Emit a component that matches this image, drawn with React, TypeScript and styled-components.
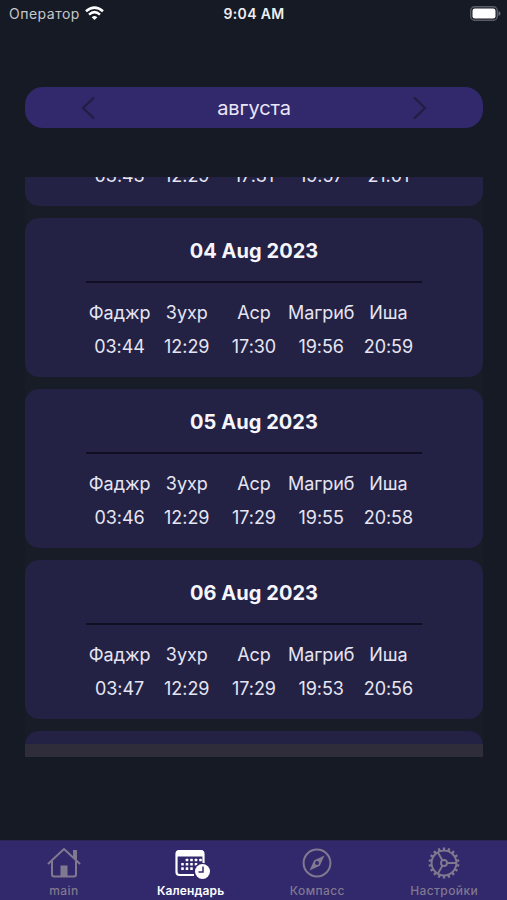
import React from "react";
import styled, { createGlobalStyle } from "styled-components";

const GlobalStyle = createGlobalStyle`
  * { box-sizing: border-box; }
  body { margin: 0; background: #161a24; }
`;

const Screen = styled.div`
  width: 507px;
  height: 900px;
  display: flex;
  flex-direction: column;
  overflow: hidden;
  background: #161a24;
  color: #e6e5f2;
  font-family: Inter, "Liberation Sans", sans-serif;
`;

const StatusBar = styled.header`
  height: 28px;
  flex: none;
  display: grid;
  grid-template-columns: 1fr auto 1fr;
  align-items: center;
  padding: 0 6px 0 9px;
`;

const Carrier = styled.div`
  display: flex;
  align-items: center;
  gap: 5px;
  padding-bottom: 2px;
  font-size: 14px;
  letter-spacing: 0.5px;
  color: #c6c7cd;
`;

const Clock = styled.div`
  margin-right: 2px;
  font-size: 14px;
  font-weight: 600;
  letter-spacing: 0.35px;
  line-height: 28px;
  color: #eeeef2;
`;

const Battery = styled.svg`
  justify-self: end;
  display: block;
  margin-bottom: 2px;
`;

const MonthBar = styled.nav`
  height: 41px;
  flex: none;
  margin: 59px 24px 0 25px;
  padding: 0 55px;
  display: flex;
  align-items: center;
  justify-content: space-between;
  border-radius: 18px;
  background: #32286c;
`;

const MonthName = styled.h1`
  margin: 0;
  font-size: 20px;
  font-weight: 400;
  line-height: 41px;
  letter-spacing: -0.1px;
  padding-top: 1px;
  color: #e9e6f7;
`;

const ArrowButton = styled.button`
  width: 16px;
  height: 24px;
  padding: 0;
  border: 0;
  background: none;
  color: #221e42;
  svg { display: block; }
`;

const Schedule = styled.main`
  position: relative;
  height: 580px;
  flex: none;
  margin: 49px 24px 0 25px;
  overflow: hidden;
  background: #181c27;
`;

const DayList = styled.div`
  margin-top: -130px;
  display: flex;
  flex-direction: column;
  gap: 12px;
`;

const ListEdge = styled.div`
  position: absolute;
  left: 0;
  right: 0;
  bottom: 0;
  height: 13px;
  background: #2e2d39;
`;

const DayCard = styled.section`
  height: 159px;
  flex: none;
  padding: 0 61px;
  border-radius: 14px;
  background: #232144;
`;

const DayTitle = styled.h2`
  height: 65px;
  margin: 0;
  padding-top: 1px;
  border-bottom: 2px solid #0f0e22;
  margin-bottom: 13px;
  font-size: 20px;
  font-weight: 700;
  line-height: 64px;
  letter-spacing: 0.05px;
  text-align: center;
  color: #f6f5fc;
`;

const Times = styled.div`
  display: grid;
  grid-template-columns: repeat(5, 1fr);
`;

const TimeColumn = styled.div`
  display: flex;
  flex-direction: column;
  align-items: center;
  font-size: 18px;
  line-height: 34px;
  white-space: nowrap;
`;

const Prayer = styled.span`
  letter-spacing: -0.05px;
`;

const Time = styled.span`
  letter-spacing: -0.05px;
`;

const TabBar = styled.nav`
  height: 60px;
  margin-top: auto;
  flex: none;
  display: grid;
  grid-template-columns: repeat(4, 1fr);
  border-top: 1px solid #292656;
  background: #32286c;
`;

const Tab = styled.a<{ $active?: boolean }>`
  display: flex;
  flex-direction: column;
  align-items: center;
  padding: 4px 0 0 1px;
  gap: 2px;
  color: ${(p) => (p.$active ? "#ffffff" : "#80798f")};
  svg { display: block; overflow: visible; }
`;

const TabLabel = styled.span<{ $active?: boolean }>`
  font-size: 12px;
  line-height: 16px;
  font-weight: ${(p) => (p.$active ? 600 : 500)};
  letter-spacing: ${(p) => (p.$active ? 0.15 : 0.4)}px;
`;

const WifiIcon = () => (
  <svg width="19" height="15" viewBox="0 0 19 15" fill="none" stroke="#fff" strokeWidth="2.5">
    <path d="M1 5.2Q9.5-2 18 5.2" />
    <path d="M4 8.6Q9.5 3.7 15 8.6" />
    <path d="M6.7 11.2Q9.5 8.6 12.3 11.2L9.5 14Z" fill="#fff" stroke="none" />
  </svg>
);

const HomeIcon = () => (
  <svg width="36" height="36" viewBox="0 0 36 36" fill="none" stroke="currentColor" strokeWidth="2">
    <path d="M2.5 18.5 18 4l15.500 14.500" strokeLinecap="round" strokeLinejoin="round" />
    <path d="M27 5h4v11l-4-3.700z" fill="currentColor" stroke="none" />
    <path d="M6 16v13.500q0 2 2 2h20q2 0 2-2V16" />
    <path d="M14.500 20.500h7V31h-7z" fill="currentColor" stroke="none" />
  </svg>
);

const calendarDots = [
  [14, 15], [18.5, 15], [23, 15], [27.5, 15],
  [9.5, 19.3], [14, 19.3], [18.5, 19.3], [23, 19.3],
  [9.5, 23.6], [14, 23.6], [18.5, 23.6],
];

const CalendarIcon = () => (
  <svg width="36" height="36" viewBox="0 0 36 36">
    <path d="M21 30H6.500q-3 0-3-3V9q0-3 3-3h21q3 0 3 3v12" fill="none" stroke="currentColor" strokeWidth="2.2" />
    <path d="M3 11.500V8.500Q3 5 6.500 5h21Q31 5 31 8.500v3z" fill="currentColor" />
    {calendarDots.map(([x, y]) => (
      <rect key={`${x}-${y}`} x={x - 1.3} y={y - 1.3} width="2.6" height="2.6" rx="0.5" fill="currentColor" />
    ))}
    <circle cx="29.500" cy="26.500" r="8.800" fill="#32286c" />
    <circle cx="29.500" cy="26.500" r="7.500" fill="currentColor" />
    <path d="M30 21.500v5.500h-4.500" fill="none" stroke="#32286c" strokeWidth="1.500" />
  </svg>
);

const CompassIcon = () => (
  <svg width="36" height="36" viewBox="0 0 36 36" fill="none" stroke="currentColor" strokeWidth="2">
    <circle cx="18" cy="18" r="13.400" />
    <path
      d="M25.500 10.500 20.800 20.800 10.500 25.500l4.700-10.300zM18 16a2 2 0 1 0 0 4 2 2 0 1 0 0-4z"
      fill="currentColor"
      fillRule="evenodd"
      stroke="none"
    />
  </svg>
);

const gearTeeth = Array.from({ length: 18 }, (_, i) => i * 20);

const GearIcon = () => (
  <svg width="36" height="36" viewBox="0 0 36 36" fill="none" stroke="currentColor" strokeWidth="1.900">
    <circle cx="18" cy="18" r="12.400" />
    <circle cx="18" cy="18" r="3" />
    <path d="M21 18h9.400M16.500 15.400 11.800 7.300M16.500 20.600l-4.700 8.100" />
    {gearTeeth.map((a) => (
      <path key={a} d="M18 2.500v3" strokeWidth="2.400" transform={`rotate(${a} 18 18)`} />
    ))}
  </svg>
);

const prayers = ["Фаджр", "Зухр", "Аср", "Магриб", "Иша"];

const days = [
  { date: "03 Aug 2023", times: ["03:43", "12:29", "17:31", "19:57", "21:01"] },
  { date: "04 Aug 2023", times: ["03:44", "12:29", "17:30", "19:56", "20:59"] },
  { date: "05 Aug 2023", times: ["03:46", "12:29", "17:29", "19:55", "20:58"] },
  { date: "06 Aug 2023", times: ["03:47", "12:29", "17:29", "19:53", "20:56"] },
  { date: "07 Aug 2023", times: [] },
];

const tabs = [
  { label: "main", Icon: HomeIcon },
  { label: "Календарь", Icon: CalendarIcon, active: true },
  { label: "Компасс", Icon: CompassIcon },
  { label: "Настройки", Icon: GearIcon },
];

const Chevron = ({ d }: { d: string }) => (
  <svg width="16" height="24" viewBox="0 0 16 24" fill="none" stroke="currentColor" strokeWidth="2.200">
    <path d={d} />
  </svg>
);

export default function App() {
  return (
    <>
      <GlobalStyle />
      <Screen>
        <StatusBar>
          <Carrier>
            Оператор
            <WifiIcon />
          </Carrier>
          <Clock>9:04 AM</Clock>
          <Battery width="31" height="15" viewBox="0 0 31 15">
            <rect x="0.700" y="0.700" width="26.600" height="13.600" rx="4" fill="none" stroke="#5b5d66" strokeWidth="1.400" />
            <rect x="2.500" y="2.500" width="23" height="10" rx="2.300" fill="#fff" />
            <path d="M28.500 5q2 .7 2 2.500t-2 2.500z" fill="#6b6d75" />
          </Battery>
        </StatusBar>
        <MonthBar>
          <ArrowButton aria-label="Предыдущий месяц">
            <Chevron d="M14 1.500 3 12l11 10.500" />
          </ArrowButton>
          <MonthName>августа</MonthName>
          <ArrowButton aria-label="Следующий месяц">
            <Chevron d="M2 1.500 13 12 2 22.500" />
          </ArrowButton>
        </MonthBar>
        <Schedule>
          <DayList>
            {days.map((day) => (
              <DayCard key={day.date}>
                <DayTitle>{day.date}</DayTitle>
                <Times>
                  {day.times.map((time, i) => (
                    <TimeColumn key={prayers[i]}>
                      <Prayer>{prayers[i]}</Prayer>
                      <Time>{time}</Time>
                    </TimeColumn>
                  ))}
                </Times>
              </DayCard>
            ))}
          </DayList>
          <ListEdge />
        </Schedule>
        <TabBar>
          {tabs.map(({ label, Icon, active }) => (
            <Tab key={label} $active={active}>
              <Icon />
              <TabLabel $active={active}>{label}</TabLabel>
            </Tab>
          ))}
        </TabBar>
      </Screen>
    </>
  );
}
